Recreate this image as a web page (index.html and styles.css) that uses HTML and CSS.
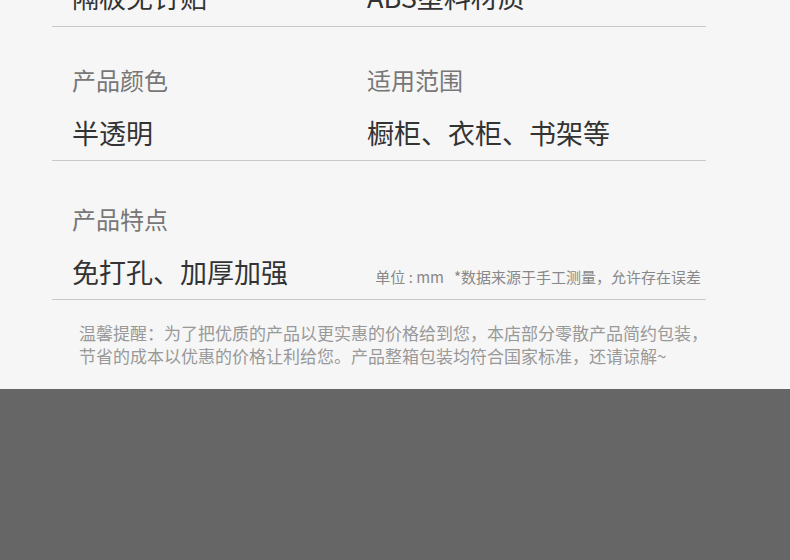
FILE: index.html
```html
<!DOCTYPE html>
<html lang="zh-CN">
<head>
  <meta charset="UTF-8">
  <meta name="viewport" content="width=device-width, initial-scale=1.0">
  <title>产品参数</title>
  <link rel="stylesheet" href="styles.css">
</head>
<body>
  <div class="sheet">
    <div class="specs">
      <div class="spec spec-top">
        <div class="value">隔板免钉贴</div>
        <div class="value">ABS塑料材质</div>
      </div>
      <div class="spec spec-mid">
        <div>
          <div class="label">产品颜色</div>
          <div class="value">半透明</div>
        </div>
        <div>
          <div class="label">适用范围</div>
          <div class="value">橱柜、衣柜、书架等</div>
        </div>
      </div>
      <div class="spec spec-last">
        <div class="wide">
          <div class="label">产品特点</div>
          <div class="value-row">
            <div class="value">免打孔、加厚加强</div>
            <div class="unit">单位 : mm<span class="gap"></span>*数据来源于手工测量，允许存在误差</div>
          </div>
        </div>
      </div>
    </div>
    <p class="notice">温馨提醒：为了把优质的产品以更实惠的价格给到您，本店部分零散产品简约包装，<br>节省的成本以优惠的价格让利给您。产品整箱包装均符合国家标准，还请谅解~</p>
  </div>
  <div class="footer"></div>
</body>
</html>
```

FILE: styles.css
```css
body {
  margin: 0;
  background-color: #666;
  font-family: "Noto Sans CJK SC", "Noto Sans", sans-serif;
  overflow: hidden;
}
.sheet {
  background: #f6f6f6;
  overflow: hidden;
}
.specs {
  width: 654px;
  margin-left: 52px;
}
.spec {
  display: grid;
  grid-template-columns: 295px 1fr;
  padding: 0 5px 9px 20px;
  border-bottom: 1px solid #c9c9c9;
}
.spec-top {
  margin-top: -21px;
  padding-bottom: 11px;
}
.spec-mid {
  padding-top: 37px;
}
.spec-last {
  padding-top: 42px;
}
.wide {
  grid-column: span 2;
}
.label {
  font-size: 24px;
  line-height: 32px;
  color: #777;
  margin-bottom: 19px;
}
.value {
  font-size: 27px;
  line-height: 36px;
  color: #333;
}
.value-row {
  display: flex;
  align-items: baseline;
  justify-content: space-between;
}
.unit {
  font-size: 15px;
  color: #888;
}
.gap {
  display: inline-block;
  width: 10px;
}
.notice {
  margin: 21px 0 0;
  padding: 0 0 22px 79px;
  font-size: 17px;
  line-height: 23px;
  color: #999;
  white-space: nowrap;
}
.footer {
  height: 172px;
  background: #666;
}
```
